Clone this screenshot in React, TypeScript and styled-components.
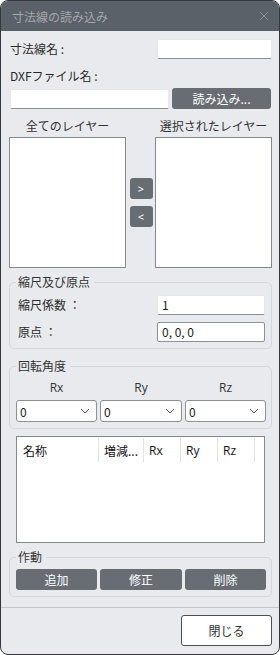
import React from 'react'
import styled, { createGlobalStyle } from 'styled-components'

const GlobalStyle = createGlobalStyle`
  html, body {
    margin: 0;
    padding: 0;
    background: #ffffff;
  }
  * {
    box-sizing: border-box;
  }
  body {
    font-family: "Noto Sans CJK JP", "Noto Sans", sans-serif;
    font-size: 12px;
    color: #222;
  }
`

const Window = styled.div`
  width: 280px;
  height: 655px;
  display: flex;
  flex-direction: column;
  background: #e8eaed;
  border: 1px solid #33383d;
  border-radius: 8px;
  overflow: hidden;
`

const TitleBar = styled.div`
  height: 30px;
  flex: none;
  display: flex;
  align-items: center;
  justify-content: space-between;
  padding: 0 10px 0 11px;
  background: #5b6168;
  color: #a3a8ae;
  font-size: 12px;
`

const CloseIcon = () => (
  <svg width="10" height="10" viewBox="0 0 10 10">
    <path d="M1 1 L9 9 M9 1 L1 9" stroke="#8b9096" strokeWidth="1" fill="none" />
  </svg>
)

const Content = styled.div`
  flex: 1;
  display: flex;
  flex-direction: column;
  padding: 8px 7px 0 7px;
`

const FieldRow = styled.div`
  display: flex;
  align-items: center;
  justify-content: space-between;
  height: 20px;
`

const Label = styled.span<{ $indent?: number }>`
  padding-left: ${({ $indent }) => $indent ?? 2}px;
  line-height: 16px;
  color: #2a2a2a;
`

const StackLabel = styled(Label)`
  display: block;
  margin-top: 9px;
  height: 16px;
`

const TextBox = styled.div<{ $width: number; $boxed?: boolean }>`
  width: ${({ $width }) => $width}px;
  height: 20px;
  background: #fff;
  border: 1px solid ${({ $boxed }) => ($boxed ? '#8d9196' : '#e6e7e9')};
  border-bottom-color: ${({ $boxed }) => ($boxed ? '#8d9196' : '#8a8d91')};
  border-radius: 2px;
  padding: 0 4px;
  line-height: 18px;
  color: #1a1a1a;
`

const ActionButton = styled.button<{ $width?: number }>`
  width: ${({ $width }) => ($width ? `${$width}px` : 'auto')};
  height: 21px;
  border: none;
  border-radius: 3px;
  background: #686d74;
  color: #ffffff;
  font-family: inherit;
  font-size: 12px;
  padding: 0;
  line-height: 21px;
`

const FileRow = styled.div`
  display: flex;
  align-items: center;
  justify-content: space-between;
  margin-top: 4px;
  padding: 0 1px 0 2px;
`

const LayerSection = styled.div`
  display: grid;
  grid-template-columns: 117px 1fr 117px;
  grid-template-rows: 16px 131px;
  row-gap: 3px;
  margin-top: 9px;
  padding-left: 1px;
`

const ListTitle = styled.div`
  text-align: center;
  line-height: 16px;
  color: #333;
`

const ListBox = styled.div`
  background: #fff;
  border: 1px solid #868a8f;
`

const MoveButtons = styled.div`
  display: flex;
  flex-direction: column;
  align-items: center;
  justify-content: center;
  gap: 7px;
  padding-left: 1px;
`

const SmallButton = styled(ActionButton)`
  width: 23px;
  height: 21px;
  font-size: 11px;
  font-family: "Noto Sans", sans-serif;
`

const Group = styled.fieldset<{ $top: number }>`
  margin: ${({ $top }) => $top}px 0 0 1px;
  border: 1px solid #d3d6da;
  border-radius: 5px;
  padding: 0 6px 6px 6px;
  min-width: 0;
`

const Legend = styled.legend`
  padding: 0 4px 0 2px;
  margin-left: 0;
  line-height: 14px;
  color: #333;
`

const GroupRow = styled(FieldRow)<{ $top: number }>`
  margin-top: ${({ $top }) => $top}px;
`

const AxisGrid = styled.div`
  display: grid;
  grid-template-columns: 81px 82px 81px;
  column-gap: 3px;
  justify-content: space-between;
`

const AxisLabel = styled.div`
  text-align: center;
  line-height: 16px;
  margin-top: 7px;
  margin-bottom: 4px;
  color: #333;
  font-family: "Open Sans", "Noto Sans", sans-serif;
`

const Combo = styled.div`
  height: 22px;
  background: #fff;
  border: 1px solid #8d9196;
  border-radius: 3px;
  display: flex;
  align-items: center;
  justify-content: space-between;
  padding: 0 6px 0 3px;
  color: #1a1a1a;
`

const Chevron = () => (
  <svg width="10" height="6" viewBox="0 0 10 6">
    <path d="M1 1 L5 5 L9 1" stroke="#555" strokeWidth="1" fill="none" />
  </svg>
)

const Table = styled.div`
  margin: 7px 7px 0 8px;
  height: 107px;
  background: #fff;
  border: 1px solid #868a8f;
  padding: 1px;
`

const HeaderRow = styled.div`
  display: grid;
  grid-template-columns: 81px 45px 37px 37px 37px;
  height: 24px;
`

const HeaderCell = styled.div<{ $latin?: boolean }>`
  display: flex;
  align-items: center;
  padding-left: 5px;
  border-right: 1px solid #e3e4e6;
  color: #111;
  white-space: nowrap;
  overflow: hidden;
  font-family: ${({ $latin }) =>
    $latin ? '"Open Sans", "Noto Sans", sans-serif' : 'inherit'};
`

const ButtonGrid = styled.div`
  display: grid;
  grid-template-columns: 81px 82px 81px;
  column-gap: 3px;
  justify-content: space-between;
  margin-top: 5px;
`

const Footer = styled.div`
  flex: none;
  height: 47px;
  border-top: 1px solid #c3c7cb;
  display: flex;
  justify-content: flex-end;
  align-items: flex-start;
  padding: 7px 7px 0 0;
`

const CloseButton = styled.button`
  width: 91px;
  height: 31px;
  background: #fff;
  border: 1px solid #4a4f55;
  border-radius: 3px;
  font-family: inherit;
  font-size: 12px;
  color: #333;
`

const App: React.FC = () => (
  <>
    <GlobalStyle />
    <Window>
      <TitleBar>
        <span>寸法線の読み込み</span>
        <CloseIcon />
      </TitleBar>
      <Content>
        <FieldRow>
          <Label>寸法線名 :</Label>
          <TextBox $width={115} />
        </FieldRow>
        <StackLabel>DXFファイル名 :</StackLabel>
        <FileRow>
          <TextBox $width={159} />
          <ActionButton $width={99}>読み込み...</ActionButton>
        </FileRow>
        <LayerSection>
          <ListTitle>全てのレイヤー</ListTitle>
          <div />
          <ListTitle>選択されたレイヤー</ListTitle>
          <ListBox />
          <MoveButtons>
            <SmallButton>&gt;</SmallButton>
            <SmallButton>&lt;</SmallButton>
          </MoveButtons>
          <ListBox />
        </LayerSection>
        <Group $top={7}>
          <Legend>縮尺及び原点</Legend>
          <GroupRow $top={6}>
            <Label $indent={2}>縮尺係数 ：</Label>
            <TextBox $width={108}>1</TextBox>
          </GroupRow>
          <GroupRow $top={7}>
            <Label $indent={2}>原点 ：</Label>
            <TextBox $width={108} $boxed>0, 0, 0</TextBox>
          </GroupRow>
        </Group>
        <Group $top={10}>
          <Legend>回転角度</Legend>
          <AxisGrid>
            <AxisLabel>Rx</AxisLabel>
            <AxisLabel>Ry</AxisLabel>
            <AxisLabel>Rz</AxisLabel>
            <Combo>
              0<Chevron />
            </Combo>
            <Combo>
              0<Chevron />
            </Combo>
            <Combo>
              0<Chevron />
            </Combo>
          </AxisGrid>
        </Group>
        <Table>
          <HeaderRow>
            <HeaderCell>名称</HeaderCell>
            <HeaderCell>増減...</HeaderCell>
            <HeaderCell $latin>Rx</HeaderCell>
            <HeaderCell $latin>Ry</HeaderCell>
            <HeaderCell $latin>Rz</HeaderCell>
          </HeaderRow>
        </Table>
        <Group $top={7}>
          <Legend>作動</Legend>
          <ButtonGrid>
            <ActionButton>追加</ActionButton>
            <ActionButton>修正</ActionButton>
            <ActionButton>削除</ActionButton>
          </ButtonGrid>
        </Group>
      </Content>
      <Footer>
        <CloseButton>閉じる</CloseButton>
      </Footer>
    </Window>
  </>
)

export default App
